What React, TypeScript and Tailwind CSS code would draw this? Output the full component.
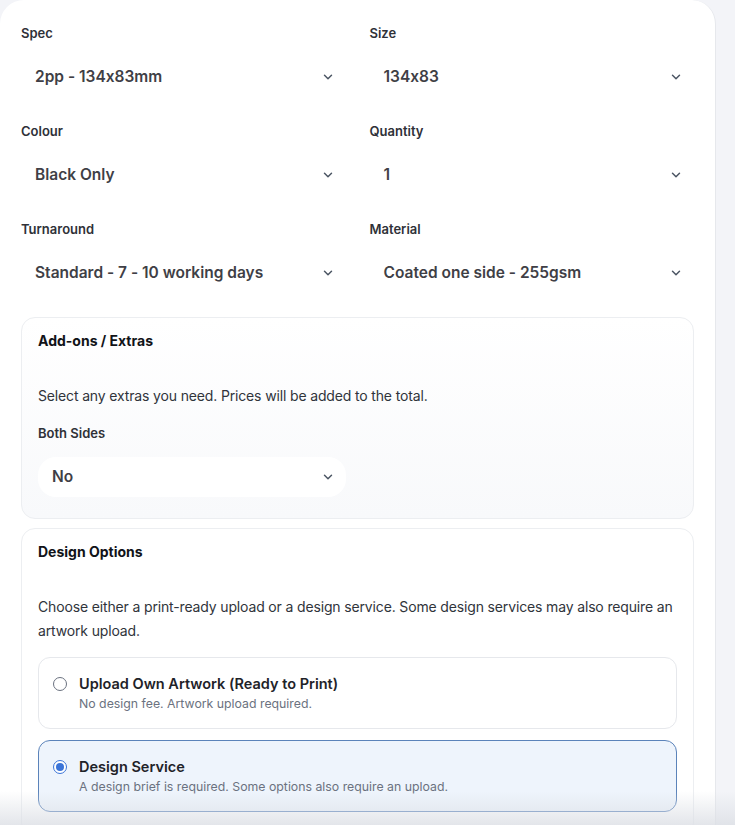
import { ChevronDown } from 'lucide-react';

const fields = [
  { label: 'Spec', value: '2pp - 134x83mm' },
  { label: 'Size', value: '134x83' },
  { label: 'Colour', value: 'Black Only' },
  { label: 'Quantity', value: '1' },
  { label: 'Turnaround', value: 'Standard - 7 - 10 working days' },
  { label: 'Material', value: 'Coated one side - 255gsm' },
];

function SelectBox({ value, className = '' }: { value: string; className?: string }) {
  return (
    <div
      className={`flex items-center justify-between rounded-[18px] bg-white pl-[14px] pr-[11px] text-[15.5px] font-semibold text-[#3f3f46] ${className}`}
    >
      <span>{value}</span>
      <ChevronDown size={14} strokeWidth={2.5} className="text-[#4b5563]" />
    </div>
  );
}

function Field({ label, value }: { label: string; value: string }) {
  return (
    <div className="flex flex-col gap-[14px]">
      <span className="text-[13px] font-semibold leading-4 text-[#2f3138]">{label}</span>
      <SelectBox value={value} className="h-[44px]" />
    </div>
  );
}

function Radio({ checked }: { checked: boolean }) {
  return checked ? (
    <span className="flex h-[14px] w-[14px] shrink-0 items-center justify-center rounded-full border border-[#3b74d8] bg-white">
      <span className="block h-[8px] w-[8px] rounded-full bg-[#3b74d8]" />
    </span>
  ) : (
    <span className="block h-[14px] w-[14px] shrink-0 rounded-full border border-[#6b7280] bg-white" />
  );
}

function DesignOption({
  title,
  sub,
  checked,
}: {
  title: string;
  sub: string;
  checked: boolean;
}) {
  return (
    <div
      className={`flex h-[72px] items-start gap-[12px] rounded-[12px] border px-[14px] pt-[16px] ${
        checked ? 'border-[#5b83ba] bg-[#eef4fc]' : 'border-[#e6e8ec] bg-white'
      }`}
    >
      <div className="pt-[3px]">
        <Radio checked={checked} />
      </div>
      <div className="flex flex-col">
        <span className="text-[14.5px] font-semibold leading-5 text-[#1f2329]">{title}</span>
        <span className="mt-[2px] text-[12.3px] leading-4 text-[#6b7280]">{sub}</span>
      </div>
    </div>
  );
}

export default function App() {
  return (
    <div className="relative flex h-[825px] overflow-hidden bg-[#f3f4f8] font-['Inter',sans-serif] [font-feature-settings:'calt'_0]">
      <div className="w-[716px] shrink-0 rounded-t-[24px] border-r border-[#e6e8ec] bg-white px-[21px] pt-[25px]">
        <div className="grid grid-cols-2 gap-x-6 gap-y-6">
          {fields.map((f) => (
            <Field key={f.label} label={f.label} value={f.value} />
          ))}
        </div>

        <section className="mt-[22px] h-[202px] rounded-[14px] border border-[#eceef1] bg-gradient-to-b from-white to-[#f8f9fb] px-[16px] pt-[13px]">
          <h3 className="text-[14px] font-bold leading-5 text-[#111318]">Add-ons / Extras</h3>
          <p className="mt-[35px] text-[14px] leading-5 tracking-[-0.15px] text-[#30343b]">
            Select any extras you need. Prices will be added to the total.
          </p>
          <div className="mt-[19px] grid grid-cols-2 gap-x-6">
            <div className="flex flex-col gap-[16px]">
              <span className="text-[13px] font-semibold leading-4 text-[#2f3138]">Both Sides</span>
              <SelectBox value="No" className="h-[40px]" />
            </div>
          </div>
        </section>

        <section className="mt-[9px] rounded-[14px] border border-[#eceef1] bg-white px-[16px] pb-6 pt-[13px]">
          <h3 className="text-[14px] font-bold leading-5 text-[#111318]">Design Options</h3>
          <p className="mt-[33px] text-[14px] leading-6 tracking-[-0.15px] text-[#30343b]">
            Choose either a print-ready upload or a design service. Some design services may also
            require an artwork upload.
          </p>
          <div className="mt-[14px] flex flex-col gap-[11px]">
            <DesignOption
              title="Upload Own Artwork (Ready to Print)"
              sub="No design fee. Artwork upload required."
              checked={false}
            />
            <DesignOption
              title="Design Service"
              sub="A design brief is required. Some options also require an upload."
              checked
            />
          </div>
        </section>
      </div>
      <div className="pointer-events-none absolute inset-x-0 bottom-0 h-[34px] bg-gradient-to-b from-transparent to-[#dcdfe5]/80" />
    </div>
  );
}
